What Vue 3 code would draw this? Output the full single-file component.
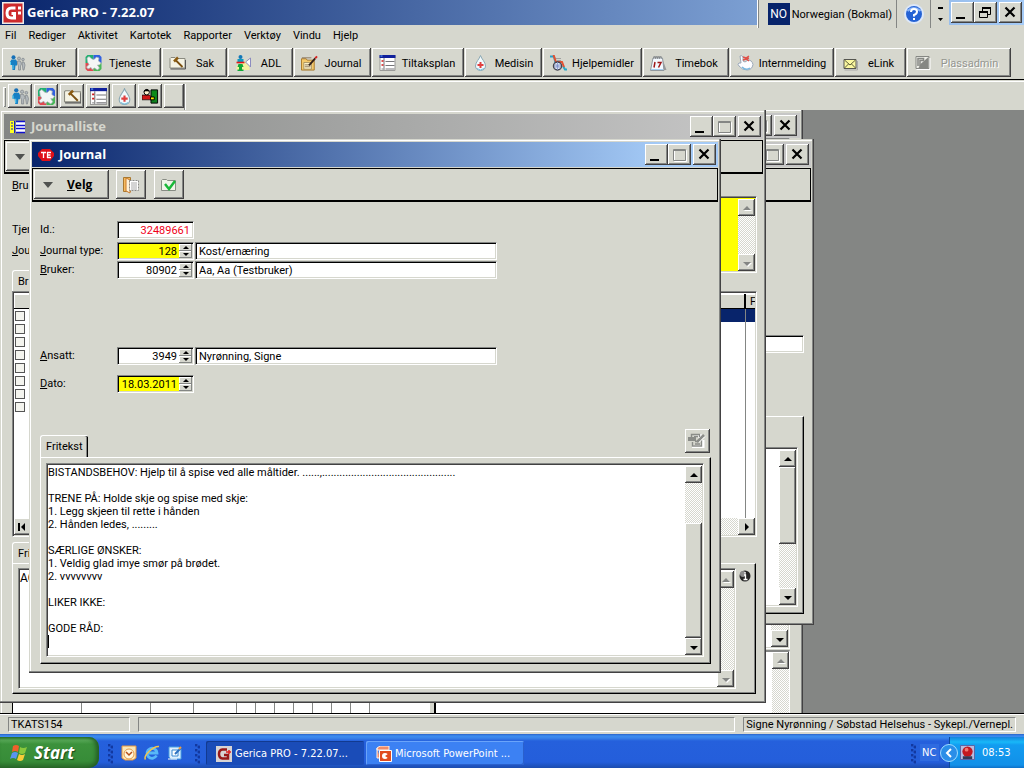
<script setup>
const menus = ['Fil', 'Rediger', 'Aktivitet', 'Kartotek', 'Rapporter', 'Verktøy', 'Vindu', 'Hjelp']
const tools = [
  { label: 'Bruker', icon: 'people' },
  { label: 'Tjeneste', icon: 'service' },
  { label: 'Sak', icon: 'case' },
  { label: 'ADL', icon: 'adl' },
  { label: 'Journal', icon: 'journal' },
  { label: 'Tiltaksplan', icon: 'plan' },
  { label: 'Medisin', icon: 'drop' },
  { label: 'Hjelpemidler', icon: 'wheelchair' },
  { label: 'Timebok', icon: 'calendar' },
  { label: 'Internmelding', icon: 'message' },
  { label: 'eLink', icon: 'mail' },
  { label: 'Plassadmin', icon: 'place', disabled: true }
]
const quick = [
  { label: 'Bruker', icon: 'people' },
  { label: 'Tjeneste', icon: 'service' },
  { label: 'Sak', icon: 'case' },
  { label: 'Tiltaksplan', icon: 'plan' },
  { label: 'Medisin', icon: 'drop' },
  { label: 'Avslutt', icon: 'exit' }
]
const note = `BISTANDSBEHOV: Hjelp til å spise ved alle måltider. ......,..............................................

TRENE PÅ: Holde skje og spise med skje:
1. Legg skjeen til rette i hånden
2. Hånden ledes, .........

SÆRLIGE ØNSKER:
1. Veldig glad imye smør på brødet.
2. vvvvvvvv

LIKER IKKE:

GODE RÅD:
`
</script>

<template>
  <div class="screen">
    <svg class="defs" aria-hidden="true">
      <symbol id="people" viewBox="0 0 16 16">
        <g fill="#b4babd" stroke="#868d91" stroke-width=".8"><circle cx="9.500" cy="3.500" r="1.500" /><path d="M8 6h3l1 3-1 2v4H9v-4L8 9z" /><circle cx="13.500" cy="4.500" r="1.300" /><path d="M12.500 7h2l1 3-1 5h-1z" /></g>
        <circle cx="4" cy="2.200" r="2" fill="#1670b8" /><path d="M2 4.500h4.500l1 2v4H6L5.500 15H3l-.5-5H.5V7z" fill="#1780c4" /><path d="M1 7v3M3.500 10v4" stroke="#5cd0f0" />
      </symbol>
      <symbol id="service" viewBox="0 0 16 16">
        <path d="M0 2L2 0h6v8H0z" fill="#20b070" /><path d="M8 0h6l2 2v6H8z" fill="#3060e0" /><path d="M0 8h8v8H2l-2-2z" fill="#e04850" /><path d="M8 8h8v6l-2 2H8z" fill="#48b858" />
        <path d="M1.500 3l2-1.500L6.500 4l2 .5L11 2l2.500 1-.5 3 2.500 2-1.500 2-2 0 2 3-2 2-3-2-2.500 1.500-1-2-3 1.500L1 12l2.500-2.500L2 7z" fill="#f4f6f6" stroke="#a0b0b0" stroke-width=".7" />
      </symbol>
      <symbol id="case" viewBox="0 0 16 16">
        <path d="M.5 3.500l1-1h4l1 1h9v9.500h-15z" fill="#f5f3e4" stroke="#8a8a80" /><path d="M1 14h15V5" fill="none" stroke="#555" />
        <path d="M6 5l7 7" stroke="#7b5010" stroke-width="1.800" /><path d="M4.500 6.500l4-4" stroke="#8a5a10" stroke-width="2.500" />
      </symbol>
      <symbol id="adl" viewBox="0 0 16 16">
        <path d="M1 11L14 4v11H1z" fill="#f4f2a0" /><path d="M10 7l5-4v9z" fill="#fff" stroke="#8c8cc0" /><circle cx="5" cy="2" r="2" fill="#1478b8" /><path d="M2 4h6v3H2z" fill="#109ac0" /><path d="M1 7.500h8" stroke="#e01818" stroke-width="1.600" /><path d="M3 9h4l1 3H6.500v2.500H8V16H2v-1.500h1.500V12H2z" fill="#12a838" />
      </symbol>
      <symbol id="journal" viewBox="0 0 18 16">
        <path d="M.5 3.500h5l1 1.500h7.500v10.500H.5z" fill="#f4c96c" stroke="#a87828" /><path d="M3 7.500h8v7H3z" fill="#fff3c8" stroke="#8a7850" stroke-width=".7" /><path d="M4 10h6M4 12h6M1 2.500h10" stroke="#8a7860" /><path d="M8.500 10.500L15 3" stroke="#332018" stroke-width="2" /><path d="M15 3l2-2" stroke="#d82020" stroke-width="2" />
      </symbol>
      <symbol id="plan" viewBox="0 0 16 16">
        <path d="M.5.500h15v15H.5z" fill="#fff" stroke="#9a9a98" /><path d="M0 0h16v3H0z" fill="#10209c" /><path d="M1 1h2" stroke="#66b0ff" /><path d="M4.500 3v12M6 6.500h9M6 10.500h9M6 14h9" stroke="#77777a" /><path d="M2 6h2M2 10h2" stroke="#d01818" stroke-width="1.500" /><path d="M2 14h2" stroke="#888" />
      </symbol>
      <symbol id="drop" viewBox="0 0 16 16">
        <path d="M8 .5C7 4 3 7 3 11c0 6 10 6 10 0C13 7 9 4 8 .5z" fill="#f2fafd" stroke="#8aa8b4" /><path d="M8 7v6M5 10h6" stroke="#e04040" stroke-width="2" /><path d="M4.500 13.500q3.500 3 7 0" stroke="#7dbedb" fill="none" />
      </symbol>
      <symbol id="wheelchair" viewBox="0 0 17 16">
        <path d="M0 1.500h4L5.500 8" fill="none" stroke="#28a0c8" stroke-width="2" /><path d="M13 11l2 3.500h2" fill="none" stroke="#28a8c8" stroke-width="2" /><path d="M3.500 0L6 7h6l2 5" fill="none" stroke="#e45030" stroke-width="2" /><path d="M6 3.500h5M7 5.500h4" stroke="#a0a0a0" /><circle cx="7.500" cy="11" r="4" fill="#dce4f4" stroke="#454550" stroke-width="1.500" /><path d="M7.500 7v8M4 11h7M5 8.500l5 5M10 8.500l-5 5" stroke="#8090c8" stroke-width=".8" />
      </symbol>
      <symbol id="calendar" viewBox="0 0 17 16">
        <path d="M12 3l4.500 12H12z" fill="#999" /><path d="M3 3h9.500l1.500 12.500H.5z" fill="#f4f9ff" stroke="#90989e" /><path d="M3.500 3.500q1-5 2 0 1-5 2 0 1-5 2 0 1-5 2 0" fill="none" stroke="#808488" /><path d="M5 7L4 12.500M7.500 7.500H11L8.500 12.500" stroke="#a01818" stroke-width="1.500" fill="none" /><path d="M1 14.500h12" stroke="#a6cff0" />
      </symbol>
      <symbol id="message" viewBox="0 0 17 16">
        <path d="M3 1q2-1 3 1v4l2 1 3-2q4 0 5 4.500-1 5.500-6 5.500-5 0-8-4Q0 9 2 8h2z" fill="#fdfdff" stroke="#9aa8b8" /><path d="M5 12q4 4 8 1" stroke="#78b8e0" fill="none" stroke-width="1.500" /><path d="M6 2l3 1 3-2M6 5l6-2M8 3l4 3" fill="none" stroke="#e05048" stroke-width="1.500" />
      </symbol>
      <symbol id="mail" viewBox="0 0 16 16">
        <path d="M1.500 4.500h12v9h-12z" fill="#fbf8a0" stroke="#555550" /><path d="M2 5l5.500 5L13 5M2 13l4-4M13 13L9 9" fill="none" stroke="#60603a" /><path d="M2 15h13V6" stroke="#aaa" fill="none" />
      </symbol>
      <symbol id="place" viewBox="0 0 16 16">
        <path d="M1.500 1.500h13v12h-13z" fill="#eeeee8" stroke="#858783" /><path d="M14 2v11H4l2-4z" fill="#858783" /><path d="M3.500 11V3.500H9v2H5.500V11" fill="none" stroke="#858783" stroke-width="1.500" /><path d="M2 14.500h13.500V3" fill="none" stroke="#fff" />
      </symbol>
      <symbol id="exit" viewBox="0 0 18 17">
        <path d="M9.500 1.500h7v14h-7z" fill="#108020" stroke="#000" /><path d="M11 3h4v10h-4z" fill="#0b8c18" /><path d="M0 7h8l2 2v3H0z" fill="#d01818" stroke="#000" stroke-width=".7" /><circle cx="5" cy="4" r="2.800" fill="#fff4d0" stroke="#000" /><path d="M2 3q3-4 6 0" fill="#000" stroke="#000" /><path d="M9 9h4v3H9z" fill="#fff000" stroke="#000" />
      </symbol>
      <symbol id="gerica" viewBox="0 0 22 22">
        <path d="M0 0h22v22H0z" fill="#ececea" /><path d="M1.500 1.500h19v19h-19z" fill="#cc2a2c" /><path d="M13.500 6H9.500Q5 6 5 11t4.500 5h3v-4.500H9.500" fill="none" stroke="#fff" stroke-width="3" /><path d="M16 4.500h3v3h-3zM16 9.500h3v3h-3z" fill="#fff" />
      </symbol>
      <symbol id="gerica-small" viewBox="0 0 16 16">
        <path d="M0 0h16v16H0z" fill="#d8d4d4" /><path d="M11 3.500H6.500Q3 4 3 8t3.500 4.500H12V9H8" fill="none" stroke="#981818" stroke-width="2.500" /><path d="M10 6h5M13 4v4" stroke="#e02020" stroke-width="1.500" />
      </symbol>
      <symbol id="outlook" viewBox="0 0 16 16">
        <path d="M1 1h14v12l-3 2H4l-3-2z" fill="#fbe6b8" stroke="#e8953c" /><circle cx="8" cy="9" r="5" fill="#fff7e0" stroke="#e49a48" /><path d="M5 7l3 3 3-3" stroke="#b84f18" stroke-width="1.500" fill="none" />
      </symbol>
      <symbol id="ie" viewBox="0 0 16 16">
        <path d="M12.500 10.500A5 5 0 1 1 13 8H4" fill="none" stroke="#58b8f8" stroke-width="2.800" /><path d="M1.500 14.500C-1 11 9 1 15 1.500" fill="none" stroke="#f4c44c" stroke-width="1.500" />
      </symbol>
      <symbol id="desktop" viewBox="0 0 16 16">
        <path d="M2 2h10l2 2v10H4l-2-2z" fill="#dceeff" stroke="#4aa0e0" /><path d="M5 5h6v6H5z" fill="#fff" stroke="#3a88d0" /><path d="M8 9l6-6" stroke="#2c70c0" stroke-width="2" /><path d="M12 4l2-2" stroke="#f0a040" stroke-width="2" /><path d="M1 14h9" stroke="#fff" />
      </symbol>
      <symbol id="min" viewBox="0 0 23 21"><path d="M5 15h9v2H5z" fill="#000" /></symbol>
      <symbol id="max" viewBox="0 0 23 21"><path d="M6.500 6.500h12v11h-12z" fill="none" stroke="#fff" /><path d="M5.500 5.500h12v11h-12zM5 6.500h13" fill="none" stroke="#848684" /></symbol>
      <symbol id="restore" viewBox="0 0 23 21"><path d="M8.500 6v3M16.500 6v6.500H14" fill="none" stroke="#000" /><path d="M8 6h9M5 10h9" stroke="#000" stroke-width="2" /><path d="M5.500 10v5.500h8V10" fill="none" stroke="#000" /></symbol>
      <symbol id="close" viewBox="0 0 23 21"><path d="M6.500 5.500l9 9M15.500 5.500l-9 9" stroke="#000" stroke-width="2.200" /></symbol>
      <symbol id="up" viewBox="0 0 16 16"><path d="M8 6l4 4H4z" /></symbol>
      <symbol id="down" viewBox="0 0 16 16"><path d="M4 7h8l-4 4z" /></symbol>
    </svg>

    <header class="app-title">
      <svg class="logo"><use href="#gerica" /></svg>
      <h1>Gerica PRO - 7.22.07</h1>
      <div class="lang">
        <button class="lang-pick"><span class="code">NO</span>Norwegian (Bokmal)</button>
        <button class="help" aria-label="Hjelp">
          <svg viewBox="0 0 22 22"><circle cx="11" cy="11" r="10" fill="#dce8fa" /><circle cx="11" cy="11" r="8" fill="#2462d4" /><path d="M4.500 8q6-6 13 0" fill="none" stroke="#88b4f8" stroke-width="2" /><path d="M8 9q0-3 3-3t3 2.500-3 3.500v1.500M11 15v2" fill="none" stroke="#fff" stroke-width="2" /></svg>
        </button>
        <span class="lang-opt"><svg viewBox="0 0 7 16"><path d="M1 1h5v2H1zM1 12h5l-2.500 3z" /></svg></span>
      </div>
      <div class="caps app-caps">
        <button aria-label="Minimer"><svg><use href="#min" /></svg></button>
        <button aria-label="Gjenopprett"><svg><use href="#restore" /></svg></button>
        <button aria-label="Lukk" class="x"><svg><use href="#close" /></svg></button>
      </div>
    </header>

    <nav class="menu"><button v-for="m in menus" :key="m">{{ m }}</button></nav>

    <div class="tools">
      <button v-for="t in tools" :key="t.label" class="bev" :disabled="t.disabled">
        <svg><use :href="'#' + t.icon" /></svg><span>{{ t.label }}</span>
      </button>
    </div>

    <div class="quick">
      <i class="grip"></i>
      <button v-for="q in quick" :key="q.label" class="bev" :aria-label="q.label"><svg><use :href="'#' + q.icon" /></svg></button>
      <button class="bev blank" aria-label="Tom"></button>
      <i class="quick-end"></i>
    </div>

    <main class="mdi">
      <section class="win win-a">
        <div class="bar idle"><span class="fill"></span>
          <div class="caps">
            <button aria-label="Minimer"><svg><use href="#min" /></svg></button><button aria-label="Maksimer"><svg><use href="#max" /></svg></button><button aria-label="Lukk" class="x"><svg><use href="#close" /></svg></button>
          </div>
        </div>
        <div class="a-body">
          <div class="sunk a-upper"><div class="fill"></div>
            <div class="sb"><i class="fill"></i><button class="bev" aria-label="Ned"><svg><use href="#down" /></svg></button></div>
          </div>
          <div class="a-lower">
            <div class="a-grid"><i v-for="n in 11" :key="n"></i></div>
            <div class="a-text"><div class="fill"></div>
              <div class="sb off"><button class="bev" aria-label="Opp"><svg><use href="#up" /></svg></button><i class="fill"></i></div>
            </div>
          </div>
        </div>
      </section>

      <section class="win win-b">
        <div class="bar idle"><span class="fill"></span>
          <div class="caps">
            <button aria-label="Minimer"><svg><use href="#min" /></svg></button><button aria-label="Maksimer"><svg><use href="#max" /></svg></button><button aria-label="Lukk" class="x"><svg><use href="#close" /></svg></button>
          </div>
        </div>
        <div class="strip"></div>
        <div class="b-body">
          <input class="field" aria-label="Verdi" />
          <div class="page b-page">
            <div class="sunk">
              <div class="fill"></div>
              <div class="sb"><button class="bev" aria-label="Opp"><svg><use href="#up" /></svg></button><i class="thumb bev b-thumb"></i><i class="fill"></i><button class="bev" aria-label="Ned"><svg><use href="#down" /></svg></button></div>
            </div>
          </div>
        </div>
      </section>

      <section class="win win-c">
        <div class="bar idle">
          <svg class="bar-icon" viewBox="0 0 16 14"><path d="M0 1h5v12H0z" fill="#ffff20" /><path d="M1 3h2M1 6h2M1 9h2M4.500 1v12" stroke="#1020c0" /><path d="M6 1h9v12H6z" fill="#fff" /><path d="M6 1.500h9M6 5.500h9M6 8.500h9M6 12.500h9" stroke="#1010d0" stroke-width="1.500" /></svg>
          <h2 class="fill">Journalliste</h2>
          <div class="caps">
            <button aria-label="Minimer"><svg><use href="#min" /></svg></button><button aria-label="Maksimer"><svg><use href="#max" /></svg></button><button aria-label="Lukk" class="x"><svg><use href="#close" /></svg></button>
          </div>
        </div>
        <div class="strip"><button class="bev wide" aria-label="Velg"><svg class="arrow" viewBox="0 0 10 6"><path d="M0 0h10L5 6z" /></svg></button></div>
        <div class="c-body">
          <div class="c-row"><u>B</u>ru</div>
          <div class="c-top">
            <div class="c-labels"><span>Tjen</span><span><u>J</u>ou</span><button class="tab">Br</button></div>
            <div class="sunk yellow"><div class="fill"></div>
              <div class="sb off"><button class="bev" aria-label="Opp"><svg><use href="#up" /></svg></button><i class="fill"></i><button class="bev" aria-label="Ned"><svg><use href="#down" /></svg></button></div>
            </div>
          </div>
          <div class="sunk list">
            <div class="list-head"><span class="fill"></span><span class="last">F</span></div>
            <div class="list-rows">
              <label v-for="n in 8" :key="n" :class="{ sel: n === 1 }"><input type="checkbox" :aria-label="'Rad ' + n" /></label>
            </div>
            <div class="hsb">
              <button class="bev" aria-label="Første"><svg viewBox="0 0 16 16"><path d="M3 4h2v8H3zM10 4v8L6 8z" /></svg></button><i class="fill"></i>
              <button class="bev" aria-label="Høyre"><svg viewBox="0 0 16 16"><path d="M6 4l4 4-4 4z" /></svg></button>
            </div>
          </div>
          <div class="c-tabs"><button class="tab">Frit</button></div>
          <div class="page c-page">
            <div class="sunk"><div class="fill c-text">AC</div>
              <div class="sb off"><button class="bev" aria-label="Opp"><svg><use href="#up" /></svg></button><i class="fill"></i><button class="bev" aria-label="Ned"><svg><use href="#down" /></svg></button></div>
            </div>
            <svg class="info" viewBox="0 0 12 12"><circle cx="6" cy="6" r="5.500" fill="#252525" /><circle cx="4" cy="4" r="3" fill="#8d8d8d" /><path d="M5 5h1.500v4M4.500 9.500h4M6 2v1.500" stroke="#fff" stroke-width="1.300" fill="none" /></svg>
          </div>
        </div>
      </section>

      <section class="win win-d">
        <div class="bar active">
          <svg class="bar-icon te" viewBox="0 0 16 14"><path d="M4 1h8l4 4v3l-4 5H4L0 8V5z" fill="#df1018" /><path d="M3 4.500h5M5.500 4v6M9 4.500h4M9.500 4v6M9 7h3.500M9 9.500h4" stroke="#fff" stroke-width="1.300" /></svg>
          <h2 class="fill">Journal</h2>
          <div class="caps">
            <button aria-label="Minimer"><svg><use href="#min" /></svg></button><button aria-label="Maksimer"><svg><use href="#max" /></svg></button><button aria-label="Lukk" class="x"><svg><use href="#close" /></svg></button>
          </div>
        </div>
        <div class="strip">
          <button class="bev wide"><svg class="arrow" viewBox="0 0 10 6"><path d="M0 0h10L5 6z" /></svg><b><u>V</u>elg</b></button>
          <button class="bev sq first" aria-label="Kopier"><svg viewBox="0 0 18 18"><path d="M1.500 1.500h7v14h-7z" fill="#f5bb62" stroke="#a87830" /><path d="M4 2l4 2v13l-4-2z" fill="#fff2d8" stroke="#c87828" /><path d="M7.500 4.500h9v10h-9z" fill="#fff" stroke="#8a8a88" stroke-dasharray="2 1" /><path d="M9 7h6M9 9h6M9 11h6M9 13h6" stroke="#aaa" /></svg></button>
          <button class="bev sq" aria-label="Godkjenn"><svg viewBox="0 0 18 18"><path d="M1.500 4.500l1-1h4l1 1h8v10h-14z" fill="#f0f4e8" stroke="#888c84" /><path d="M5 8l4 5 6-8" fill="none" stroke="#18b838" stroke-width="2.500" /></svg></button>
        </div>
        <div class="d-body">
          <form class="form" @submit.prevent>
            <div class="row"><label for="f-id">Id.:</label><div class="field"><input id="f-id" class="num red" value="32489661" /></div></div>
            <div class="row r3"><label for="f-type"><u>J</u>ournal type:</label>
              <div class="field"><input id="f-type" class="num hot" value="128" /><span class="spin"><button aria-label="Opp"></button><button class="dn" aria-label="Ned"></button></span></div>
              <div class="field long"><input aria-label="Journal type navn" value="Kost/ernæring" /></div></div>
            <div class="row r1"><label for="f-user"><u>B</u>ruker:</label>
              <div class="field"><input id="f-user" class="num" value="80902" /><span class="spin"><button aria-label="Opp"></button><button class="dn" aria-label="Ned"></button></span></div>
              <div class="field long"><input aria-label="Bruker navn" value="Aa, Aa (Testbruker)" /></div></div>
            <div class="row r68"><label for="f-emp"><u>A</u>nsatt:</label>
              <div class="field"><input id="f-emp" class="num" value="3949" /><span class="spin"><button aria-label="Opp"></button><button class="dn" aria-label="Ned"></button></span></div>
              <div class="field long"><input aria-label="Ansatt navn" value="Nyrønning, Signe" /></div></div>
            <div class="row r10"><label for="f-date"><u>D</u>ato:</label>
              <div class="field"><input id="f-date" class="num hot" value="18.03.2011" /><span class="spin"><button aria-label="Opp"></button><button class="dn" aria-label="Ned"></button></span></div></div>
          </form>
          <div class="d-tabs"><button class="tab on">Fritekst</button><span class="fill"></span>
            <button class="bev note-btn" aria-label="Rediger"><svg viewBox="0 0 19 16"><path d="M6 2.500h6v3M4 13.500h11V7" stroke="#fff" fill="none" stroke-width="3" /><path d="M3.500 5V1.500h8V4M6 3.500h4M4.500 9v4h9V7M7 8.500h4M7 11h5" stroke="#8a8c88" fill="none" stroke-width="1.400" /><path d="M0 4h8v4H0z" fill="#8a8c88" /><path d="M9 9l7-7" stroke="#8a8c88" stroke-width="2.500" /><path d="M11 9.500l6-6" stroke="#fff" /></svg></button></div>
          <div class="page d-page">
            <div class="sunk">
              <div class="note fill"><textarea aria-label="Fritekst" :value="note" spellcheck="false"></textarea><i class="caret"></i></div>
              <div class="sb"><button class="bev" aria-label="Opp"><svg><use href="#up" /></svg></button><i class="fill"></i><i class="thumb bev d-thumb"></i><button class="bev" aria-label="Ned"><svg><use href="#down" /></svg></button></div>
            </div>
          </div>
        </div>
      </section>
    </main>

    <footer class="status">
      <span class="st s1">TKATS154</span><span class="st fill"></span><span class="st">Signe Nyrønning / Søbstad Helsehus - Sykepl./Vernepl.</span>
    </footer>

    <div class="taskbar">
      <button class="start">
        <svg viewBox="0 0 20 18"><path d="M3 2q3-2 6 0L8 8Q5 6 2 8z" fill="#f0602c" /><path d="M10 3q3 2 7 0l-2 6q-3 2-6 0z" fill="#8ac83c" /><path d="M2 9q3-2 6 0l-2 6q-3-2-6 0z" fill="#5a94f0" /><path d="M9 10q3 2 6 0l-2 6q-3 2-6 0z" fill="#f8cc38" /></svg>Start
      </button>
      <i class="dots d1"></i>
      <div class="ql"><svg><use href="#outlook" /></svg><svg><use href="#ie" /></svg><svg><use href="#desktop" /></svg></div>
      <i class="dots d2"></i>
      <button class="task cur"><svg><use href="#gerica-small" /></svg>Gerica PRO - 7.22.07...</button>
      <button class="task"><svg viewBox="0 0 16 16"><path d="M1 2l3-2h9v4H1zM1 2v10h3" fill="#f08c68" stroke="#fff0e8" /><path d="M3.500 4.500h12v11h-12z" fill="#e04c20" stroke="#fff" /><circle cx="9" cy="10" r="3" fill="#fff" /><path d="M9 10l3-2v4z" fill="#e04c20" /></svg>Microsoft PowerPoint ...</button>
      <span class="fill"></span>
      <i class="dots d3"></i>
      <span class="nc">NC</span>
      <div class="tray">
        <button class="chev" aria-label="Vis skjulte ikoner"><svg viewBox="0 0 18 18"><circle cx="9" cy="9" r="8.500" fill="#2a8ee8" stroke="#a0dcff" /><path d="M11 5L7 9l4 4" fill="none" stroke="#fff" stroke-width="2" /></svg></button>
        <svg class="tray-icon" viewBox="0 0 16 16"><path d="M.5.500h15v15H.5z" fill="#b8bce0" stroke="#5c60a0" /><circle cx="8" cy="7" r="5.500" fill="#c41820" /><circle cx="7" cy="5" r="2" fill="#f07870" /><path d="M3 12h10v3H3z" fill="#333a58" /></svg>
        <span>08:53</span>
      </div>
    </div>
  </div>
</template>

<style>
html, body { margin: 0; background: #d6d7ce; }
</style>

<style scoped>
* { box-sizing: border-box; }
.screen {
  --face: #d6d7ce; --sh: #848684; --dk: #424142;
  min-height: 100vh; display: flex; flex-direction: column; overflow: hidden;
  background: var(--face); color: #000;
  font: 11px/13px Roboto, "Liberation Sans", Arial, sans-serif;
}
.defs { position: absolute; width: 0; height: 0; }
button, input, textarea { font: inherit; color: inherit; margin: 0; padding: 0; border: 0; border-radius: 0; outline: 0; }
button { background: var(--face); white-space: nowrap; }
svg { display: block; flex: none; }
h1, h2 { margin: 0; font: bold 13px/16px "Open Sans", "Noto Sans", sans-serif; }
.fill { flex: 1; min-width: 0; }
.bev { background: var(--face); box-shadow: inset -1px -1px var(--dk), inset 1px 1px #fff, inset -2px -2px var(--sh); }

.app-title { position: relative; z-index: 5; flex: none; height: 25px; display: flex; align-items: center; padding-left: 2px; background: linear-gradient(90deg, #08246b, #a5cbf7); }
.logo { width: 22px; height: 22px; }
h1 { flex: 1; color: #fff; padding: 0 0 2px 3px; }
.caps { display: flex; flex: none; padding-right: 2px; }
.caps button { width: 23px; height: 21px; box-shadow: inset -1px -1px var(--dk), inset 1px 1px #fff, inset -2px -2px var(--sh); }
.caps svg { width: 23px; height: 21px; }
.caps .x { margin-left: 2px; }
.win-a .caps { padding-right: 3px; }
.lang { position: absolute; top: 0; right: 75px; min-width: 188px; height: 28px; display: flex; align-items: center; background: var(--face); border-left: 1px solid #fff; box-shadow: inset 1px 0 var(--sh); }
.lang button { height: 28px; display: flex; align-items: center; border-right: 1px solid var(--sh); }
.lang-pick { flex: 1; margin-left: 2px; padding: 0 4px 0 8px; }
.code { width: 22px; height: 22px; line-height: 22px; margin-right: 2px; background: #08246b; color: #fff; font-size: 12px; }
.help { width: 34px; justify-content: center; }
.help svg { width: 22px; height: 22px; }
.lang-opt { width: 18px; display: flex; justify-content: center; }
.lang-opt svg { width: 7px; height: 16px; }

.menu { flex: none; height: 22px; display: flex; align-items: center; gap: 12px; padding: 0 0 2px 5px; }
.tools {
  position: relative; flex: none; height: 33px; display: grid; column-gap: 1px; padding: 1px 0 2px 2px; border-bottom: 1px solid #000;
  grid-template-columns: 75px 83px 65px 65px 77px 92px 77px 99px 86px 104px 71px 104px; box-shadow: 0 1px var(--face), 0 2px #fff;
}
.tools button { display: flex; align-items: center; padding-left: 7px; }
.tools svg { width: 17px; height: 16px; }
.tools span { flex: 1; text-align: center; padding: 1px 5px 0 2px; }
.tools button:disabled { color: #949690; text-shadow: 1px 1px #fff; }
.quick { flex: none; height: 30px; display: flex; align-items: flex-start; gap: 2px; padding: 4px 0 0 3px; }
.grip { width: 3px; height: 20px; margin: 3px 0 0; box-shadow: inset 1px 1px #fff, inset -1px -1px var(--sh); }
.quick button { width: 24px; height: 24px; display: flex; align-items: center; justify-content: center; }
.quick svg { width: 17px; height: 17px; }
.quick .blank { width: 20px; }
.quick-end { width: 2px; height: 26px; background: linear-gradient(90deg, var(--sh) 50%, #fff 50%); margin-left: -2px; }

.mdi { position: relative; flex: 1; min-height: 604px; background: #848684; overflow: hidden; border-bottom: 1px solid #000; }
.win { position: absolute; display: flex; flex-direction: column; padding: 3px; background: var(--face); box-shadow: inset -1px -1px var(--dk), inset -2px -2px var(--sh), inset 1px 1px var(--face), inset 2px 2px #fff; }
.win-a { left: 0; top: -1px; width: 803px; height: 640px; padding-top: 4px; }
.win-b { left: 60px; top: 29px; width: 754px; height: 486px; }
.win-c { left: 0; top: 0; width: 766px; height: 593px; padding: 4px 3px 3px 4px; }
.win-d { left: 29px; top: 29px; width: 692px; height: 534px; }
.bar { flex: none; height: 25px; display: flex; align-items: center; }
.idle { background: linear-gradient(90deg, #848684, #c8c8c8); color: #d6d7ce; }
.active { background: linear-gradient(90deg, #08246b, #a5cbf7 92%); color: #fff; }
.bar h2 { padding-bottom: 2px; }
.bar-icon { width: 16px; height: 14px; margin: 0 5px 0 6px; }
.strip { flex: none; height: 34px; margin-top: 1px; display: flex; padding: 1px 0 0 1px; border: solid #000; border-width: 1px 1px 2px; }
.strip button { height: 29px; display: flex; align-items: center; }
.wide { width: 75px; padding-left: 9px; font-weight: bold; }
.wide b { margin-left: 14px; font: bold 12px/14px "Open Sans", sans-serif; }
.arrow { width: 10px; height: 6px; fill: #505250; }
.sq { width: 30px; justify-content: center; margin-left: 8px; }
.first { margin-left: 7px; }
.sq svg { width: 18px; height: 18px; }

.sunk { display: flex; background: #fff; border: 1px solid; border-color: var(--sh) #fff #fff var(--sh); box-shadow: inset 1px 1px var(--dk), inset -1px -1px var(--face); padding: 2px 1px 1px 1px; }
.sb { flex: none; width: 17px; display: flex; flex-direction: column; }
.sb, .hsb { background: repeating-conic-gradient(#fff 0 25%, #d6d7ce 0 50%) 0 0 / 2px 2px; }
.sb > button, .hsb > button { flex: none; width: 17px; height: 17px; display: flex; align-items: center; justify-content: center; }
.sb svg, .hsb svg { width: 16px; height: 16px; }
.off svg { fill: #848684; filter: drop-shadow(1px 1px 0 #fff); }
.thumb { flex: none; display: block; }
.tab { align-self: flex-start; height: 22px; padding: 0 5px; border: solid #fff; border-width: 1px 0 0 1px; border-radius: 3px 2px 0 0; }
.tab.on { box-shadow: inset -1px 0 #000, inset -2px 0 var(--sh); }
.page { display: flex; border: 1px solid; border-color: #fff #000 #000 #fff; box-shadow: inset -1px -1px var(--sh); }

.a-body { flex: 1; display: flex; flex-direction: column; padding: 0 10px 0 9px; }
.a-upper { height: 511px; flex: none; }
.a-lower { flex: 1; display: flex; margin-top: 1px; }
.a-grid { width: 424px; display: flex; background: #fff; border: solid #000; border-width: 2px 2px 0 1px; box-shadow: inset -4px 0 var(--face); padding-right: 64px; }
.a-grid i { flex: 18 1 0; border-right: 1px solid var(--sh); }
.a-grid i:nth-child(-n+2) { flex-grow: 68; }
.a-grid i:nth-child(3), .a-grid i:nth-child(4) { flex-grow: 42; }
.a-text { flex: 1; display: flex; background: #fff; border: solid; border-width: 2px 1px 0 0; border-color: var(--sh) #fff; }

.b-body { flex: 1; display: flex; flex-direction: column; padding: 133px 7px 8px; }
.b-body > input { align-self: flex-end; width: 300px; }
.b-page { flex: 1; margin-top: 63px; padding: 30px 5px 6px; }
.b-page .sunk { flex: 1; }
.b-thumb { height: 77px; }

.c-body { flex: 1; display: flex; flex-direction: column; padding: 5px 6px 6px 8px; }
.c-row { height: 17px; }
.c-top { height: 95px; display: flex; }
.c-labels { width: 80px; display: flex; flex-direction: column; padding-top: 27px; gap: 8px; }
.c-labels .tab { margin-top: 5px; width: 60px; text-align: left; }
.yellow { flex: 1; height: 77px; background: #ff0; }
.list { flex: none; height: 246px; flex-direction: column; }
.list-head { flex: none; height: 15px; display: flex; background: var(--face); border-bottom: 1px solid #000; box-shadow: inset 1px 1px #fff; }
.list-head .last { width: 11px; padding-left: 4px; border-left: 2px solid #000; overflow: hidden; line-height: 15px; }
.list-rows { flex: 1; background: linear-gradient(90deg, transparent calc(100% - 10px), #848684 0, #848684 calc(100% - 9px), transparent 0); }
.list-rows label { display: flex; align-items: center; height: 13px; padding-left: 1px; }
.list-rows .sel { background: linear-gradient(90deg, #fff 60px, #08246b 60px, #08246b calc(100% - 10px), #848684 0, #848684 calc(100% - 9px), #08246b 0); }
.list-rows input { appearance: none; width: 10px; height: 10px; border: 1px solid #555; background: #f4f4ee; }
.hsb { flex: none; height: 17px; display: flex; }
.c-tabs { height: 26px; padding-top: 5px; }
.c-tabs .tab { width: 60px; text-align: left; }
.c-page { flex: 1; margin-right: 1px; padding: 4px 0 4px 5px; }
.c-page .sunk { flex: 1; }
.c-text { font-size: 12px; line-height: 15px; }
.info { width: 12px; height: 12px; margin: 2px 4px 0 3px; }

.d-body { flex: 1; display: flex; flex-direction: column; padding: 19px 7px 6px 8px; }
.row { display: flex; gap: 1px; height: 18px; }
.row label { width: 76px; line-height: 18px; }
.r3 { margin-top: 3px; } .r1 { margin-top: 1px; } .r68 { margin-top: 68px; } .r10 { margin-top: 10px; }
.field { display: flex; width: 77px; height: 18px; background: #fff; border: 1px solid; border-color: var(--sh) #fff #fff var(--sh); box-shadow: inset 1px 1px #000, inset -1px -1px var(--face); padding: 1px; }
.field.long { width: 302px; }
.field > input { flex: 1; min-width: 0; width: 100%; background: transparent; padding: 1px 2px 0; line-height: 13px; }
.field > .num { text-align: right; }
.field > .red { color: #f00018; }
.field > .hot { background: #ff0; background-clip: content-box; box-shadow: inset 0 0 0 20px #ff0; box-shadow: none; background-clip: border-box; }
.spin { flex: none; width: 13px; display: flex; flex-direction: column; }
.spin button { flex: 1; display: flex; align-items: center; justify-content: center; box-shadow: inset -1px -1px var(--sh), inset 1px 1px #fff; }
.spin button::before { content: ""; border: solid transparent; border-width: 0 3px 3px; border-bottom-color: #000; }
.spin .dn::before { border-width: 3px 3px 0; border-top-color: #000; }
.d-tabs { flex: 1; display: flex; align-items: flex-end; }
.d-tabs .tab { align-self: flex-end; }
.note-btn { width: 25px; height: 24px; margin: 0 1px 4px; display: flex; align-items: center; justify-content: center; }
.note-btn svg { width: 19px; height: 16px; }
.d-page { height: 207px; padding: 5px 6px 6px 5px; }
.d-page .sunk { flex: 1; }
.d-thumb { height: 115px; }
.note { position: relative; display: flex; }
.note textarea { flex: 1; resize: none; background: transparent; overflow: hidden; line-height: 13px; white-space: pre; }
.caret { position: absolute; left: 0; top: 169px; width: 1px; height: 13px; background: #000; }

.status { flex: none; height: 20px; display: flex; gap: 8px; padding: 2px 8px; border-top: 1px solid #fff; }
.st { border: 1px solid; border-color: var(--sh) #fff #fff var(--sh); padding: 0 2px; line-height: 14px; white-space: nowrap; }
.s1 { width: 122px; }

.taskbar {
  flex: none; height: 34px; display: flex; align-items: stretch; color: #fff;
  font: 11px/14px "DejaVu Sans Condensed", "Noto Sans", sans-serif;
  background: linear-gradient(#2a62c8, #3c8cf0 2px, #3a84ea 4px, #2560dc 7px, #245edb 28px, #1c4cae);
}
.taskbar button { color: #fff; }
.start { width: 99px; margin-top: 3px; display: flex; align-items: center; gap: 4px; padding-left: 10px; border-radius: 0 10px 10px 0; background: linear-gradient(#2f7c30, #58a858 3px, #3c923c 7px, #378c38 24px, #2a6c2a); box-shadow: inset -3px 0 4px #245c24; font: italic bold 17px/20px "Open Sans", sans-serif; text-shadow: 1px 1px 1px #1a4a1a; }
.start svg { width: 20px; height: 18px; }
.dots { width: 5px; height: 20px; margin-top: 10px; background: radial-gradient(circle at 1px 1px, #1238a0 1px, transparent 2px) 0 0 / 5px 5px, radial-gradient(circle at 4px 3px, #1238a0 1px, transparent 2px) 0 0 / 5px 5px; }
.d1 { margin-left: 9px; } .d2 { margin-left: 12px; }
.ql { display: flex; align-items: center; gap: 7px; margin-left: 8px; padding-top: 3px; }
.ql svg { width: 16px; height: 16px; }
.task { width: 158px; margin: 7px 0 3px 2px; display: flex; align-items: center; gap: 3px; padding: 2px 0 0 10px; border-radius: 2px; background: #3c81f3; box-shadow: inset 1px 1px #6aa4fa, inset -1px -1px #2a60cc; }
.task.cur { margin-left: 6px; background: #1a4cb8; box-shadow: inset 1px 1px #123a90; }
.task svg { width: 16px; height: 16px; }
.nc { margin: 10px 0 7px 4px; padding: 2px 0 0 2px; width: 19px; background: #2f6be0; }
.tray { width: 75px; margin: 3px 0 0 10px; display: flex; align-items: center; background: linear-gradient(#1684dc, #18b8f8 5px, #129cf0 8px, #1290e8 28px, #0e70c8); border-left: 1px solid #0c4a9c; }
.chev { margin-left: -10px; width: 18px; height: 18px; background: none; }
.tray-icon { width: 15px; height: 15px; margin: 0 7px 0 2px; }
</style>
